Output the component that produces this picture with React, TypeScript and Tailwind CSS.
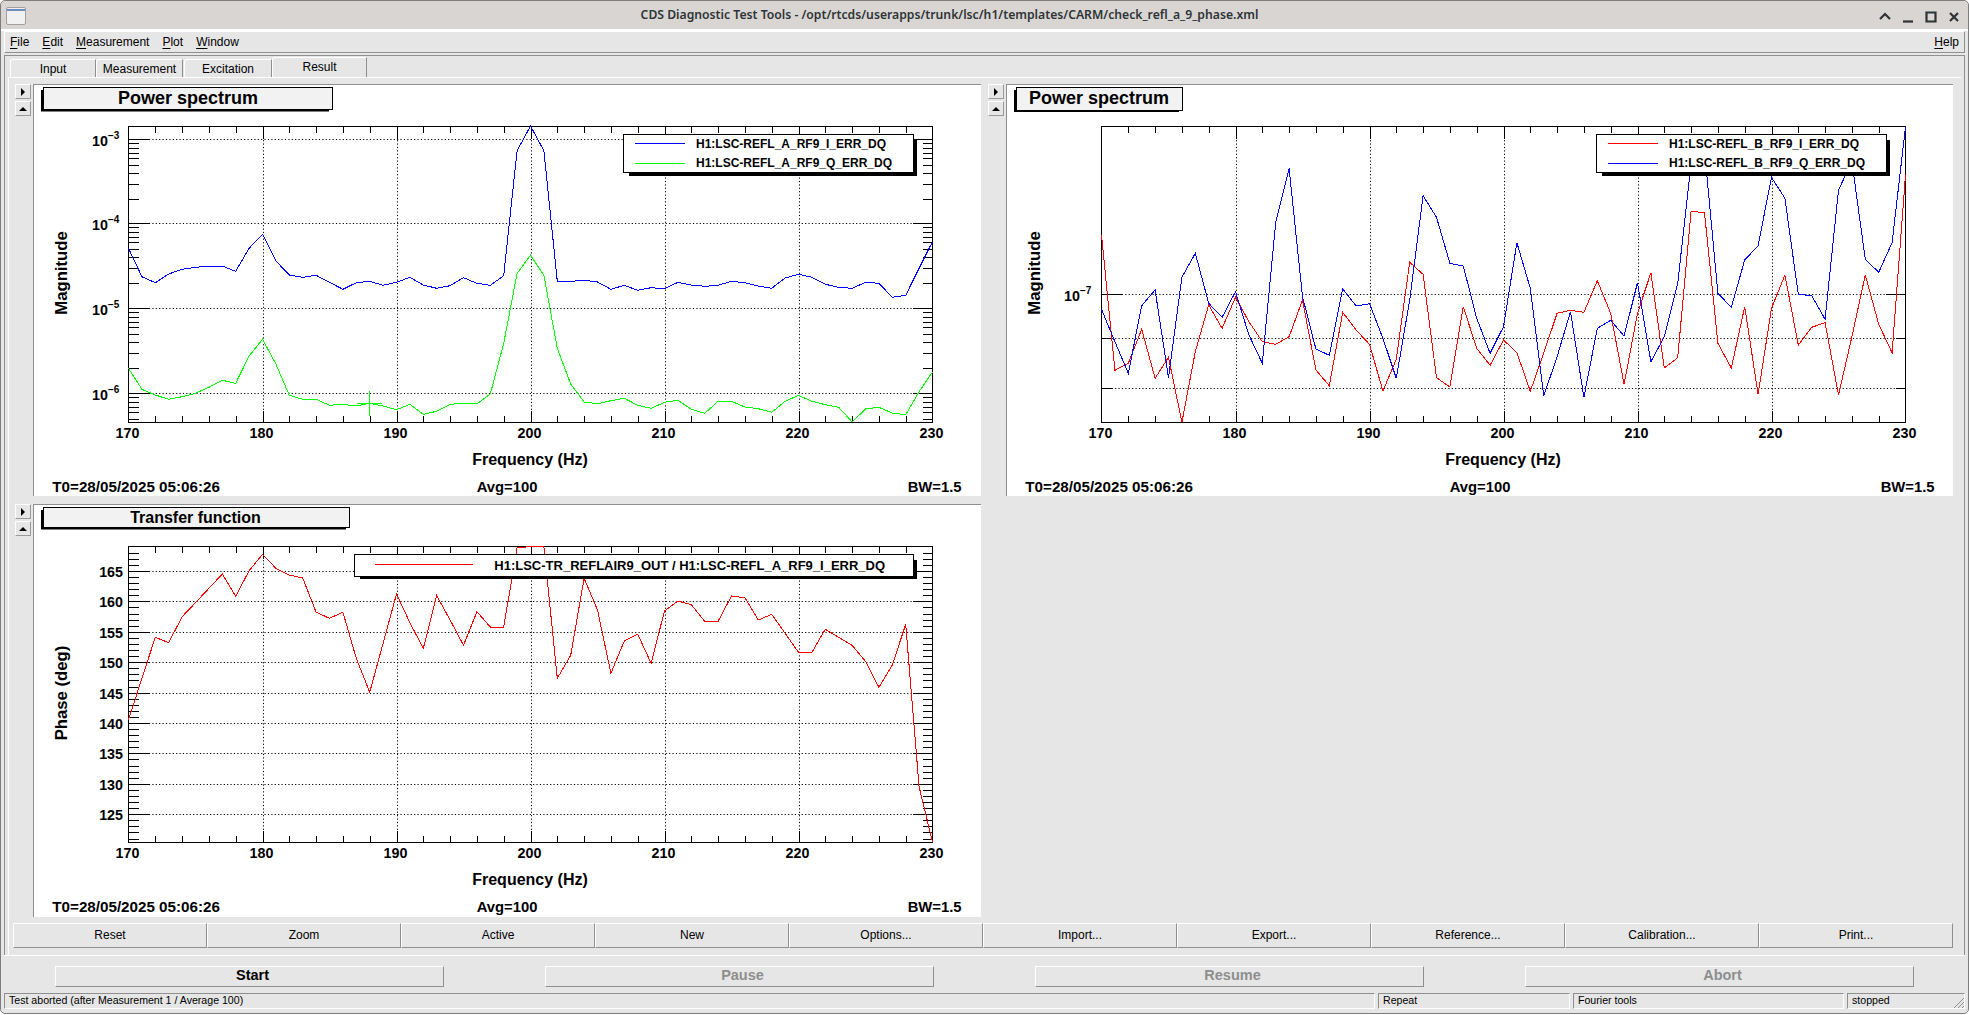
import type { ReactNode } from "react";

// x position of each sample (1 Hz apart, 170..230) inside a plot's canvas
const AX_L = 94.5;
const AX_R = 898.5;
const AX_T = 41.5;
const AX_B = 337.5;
const HZ = (AX_R - AX_L) / 60;
const fx = (f: number) => AX_L + (f - 170) * HZ;

const line = (ys: number[], dy: number) =>
  ys.map((y, i) => `${fx(170 + i).toFixed(1)},${(dy + y / 3).toFixed(1)}`).join(" ");

const A_BLUE = [445, 530, 548, 522, 508, 502, 498, 498, 514, 445, 403, 483, 525, 532, 526, 547, 568, 548, 544, 556, 547, 532, 555, 565, 557, 533, 550, 556, 527, 152, 78, 152, 544, 544, 541, 546, 568, 556, 571, 563, 566, 547, 555, 559, 556, 544, 548, 558, 565, 534, 523, 532, 553, 562, 565, 547, 550, 592, 586, 505, 425];
const A_GREEN = [805, 868, 885, 898, 890, 880, 862, 841, 850, 768, 718, 792, 886, 898, 898, 916, 913, 918, 910, 918, 929, 913, 943, 934, 913, 910, 912, 882, 730, 520, 466, 526, 745, 852, 906, 911, 902, 895, 916, 925, 907, 901, 928, 940, 904, 904, 921, 926, 937, 904, 886, 904, 914, 922, 966, 927, 922, 939, 944, 875, 816];
const B_BLUE = [688, 785, 880, 677, 630, 893, 592, 520, 670, 712, 635, 765, 850, 428, 265, 650, 807, 826, 626, 678, 671, 775, 895, 660, 347, 412, 550, 558, 715, 820, 740, 488, 625, 948, 830, 695, 952, 745, 721, 768, 608, 845, 770, 610, 250, 210, 640, 682, 540, 497, 292, 355, 643, 647, 718, 330, 245, 538, 577, 488, 140];
const B_RED = [465, 871, 850, 748, 895, 832, 1027, 815, 675, 745, 652, 725, 785, 793, 770, 660, 870, 917, 697, 750, 793, 933, 838, 547, 583, 893, 921, 680, 805, 856, 780, 818, 934, 820, 700, 691, 697, 602, 700, 913, 700, 578, 864, 833, 394, 398, 790, 864, 680, 943, 685, 585, 795, 742, 728, 945, 770, 585, 733, 818, 285];
const TF_RED = [660, 535, 412, 428, 350, 308, 265, 222, 289, 212, 163, 205, 225, 234, 337, 355, 337, 475, 577, 430, 282, 368, 445, 287, 360, 436, 335, 381, 381, 143, 140, 140, 535, 466, 235, 330, 520, 423, 402, 490, 333, 303, 314, 364, 364, 288, 293, 360, 343, 400, 457, 457, 388, 412, 436, 484, 562, 495, 373, 860, 1027];

const DECADES = [
  { y: 54.5, exp: "3" },
  { y: 138.5, exp: "4" },
  { y: 223.5, exp: "5" },
  { y: 308.5, exp: "6" },
];

function logMinor(): number[] {
  const out: number[] = [];
  for (const d of DECADES) {
    for (let m = 2; m < 10; m++) {
      const y = d.y + 84.7 * (1 - Math.log10(m));
      if (y > AX_T && y < AX_B) out.push(Math.round(y) + 0.5);
    }
  }
  return out;
}

function Frame({
  grid,
  major,
  minor,
  ylabel,
  labels,
  children,
}: {
  grid: number[];
  major: number[];
  minor: number[];
  ylabel: { x: number; y: number; text: string };
  labels: ReactNode;
  children: ReactNode;
}) {
  const xMajor = [170, 180, 190, 200, 210, 220, 230];
  const xMinor: number[] = [];
  for (let f = 172; f < 230; f += 2) if (f % 10 !== 0) xMinor.push(f);
  return (
    <svg className="block h-full w-full">
      <g stroke="#000" strokeWidth={1} strokeDasharray="1.2 2.2">
        {xMajor.slice(1, -1).map((f) => (
          <line key={f} x1={Math.round(fx(f)) + 0.5} x2={Math.round(fx(f)) + 0.5} y1={AX_T} y2={AX_B} />
        ))}
        {grid.map((y) => (
          <line key={y} x1={AX_L} x2={AX_R} y1={y} y2={y} />
        ))}
      </g>
      <g stroke="#000" strokeWidth={1} shapeRendering="crispEdges">
        {xMinor.map((f) => (
          <g key={f}>
            <line x1={Math.round(fx(f)) + 0.5} x2={Math.round(fx(f)) + 0.5} y1={AX_T} y2={AX_T + 6} />
            <line x1={Math.round(fx(f)) + 0.5} x2={Math.round(fx(f)) + 0.5} y1={AX_B} y2={AX_B - 7} />
          </g>
        ))}
        {xMajor.slice(1, -1).map((f) => (
          <g key={f}>
            <line x1={Math.round(fx(f)) + 0.5} x2={Math.round(fx(f)) + 0.5} y1={AX_T} y2={AX_T + 12} />
            <line x1={Math.round(fx(f)) + 0.5} x2={Math.round(fx(f)) + 0.5} y1={AX_B} y2={AX_B - 12} />
          </g>
        ))}
        {major.map((y) => (
          <g key={y}>
            <line x1={AX_L} x2={AX_L + 20} y1={y} y2={y} />
            <line x1={AX_R} x2={AX_R - 20} y1={y} y2={y} />
          </g>
        ))}
        {minor.map((y) => (
          <g key={y}>
            <line x1={AX_L} x2={AX_L + 10} y1={y} y2={y} />
            <line x1={AX_R} x2={AX_R - 10} y1={y} y2={y} />
          </g>
        ))}
        <rect x={AX_L} y={AX_T} width={AX_R - AX_L} height={AX_B - AX_T} fill="none" />
      </g>
      {children}
      <g className="font-bold" fill="#000">
        {xMajor.map((f) => (
          <text key={f} x={fx(f) - 1} y={352.5} textAnchor="middle" fontSize={14.3}>
            {f}
          </text>
        ))}
        {labels}
        <text
          transform={`translate(${ylabel.x} ${ylabel.y}) rotate(-90)`}
          textAnchor="middle"
          fontSize={16.7}
        >
          {ylabel.text}
        </text>
        <text x={496} y={379.5} textAnchor="middle" fontSize={16}>
          Frequency (Hz)
        </text>
        <text x={18.3} y={406.5} fontSize={15.2}>
          T0=28/05/2025 05:06:26
        </text>
        <text x={442.7} y={406.5} fontSize={14.8}>
          Avg=100
        </text>
        <text x={873.7} y={406.5} fontSize={14.8}>
          BW=1.5
        </text>
      </g>
    </svg>
  );
}

function TitleBox({ x, x2, y2, cx, base, size, text }: { x: number; x2: number; y2: number; cx: number; base: number; size: number; text: string }) {
  return (
    <g>
      <rect x={x - 2.5} y={5} width={x2 - x - 1} height={y2 - 3} fill="#000" />
      <rect x={x} y={2.5} width={x2 - x} height={y2 - 2.5} fill="#f2f2f2" stroke="#000" shapeRendering="crispEdges" />
      <text x={cx} y={base} textAnchor="middle" fontSize={size} className="font-bold">
        {text}
      </text>
    </g>
  );
}

function Legend({ items }: { items: { color: string; text: string }[] }) {
  return (
    <g>
      <rect x={595} y={55} width={288} height={36} fill="#000" />
      <rect x={589.5} y={49.5} width={290} height={38} fill="#fff" stroke="#000" shapeRendering="crispEdges" />
      {items.map((it, i) => (
        <g key={it.text}>
          <line x1={600.5} x2={651} y1={58.5 + i * 20} y2={58.5 + i * 20} stroke={it.color} shapeRendering="crispEdges" />
          <text x={662} y={62.7 + i * 19} fontSize={12} className="font-bold">
            {it.text}
          </text>
        </g>
      ))}
    </g>
  );
}

function PlotA() {
  return (
    <Frame
      grid={DECADES.map((d) => d.y)}
      major={DECADES.map((d) => d.y)}
      minor={logMinor()}
      ylabel={{ x: 33, y: 188, text: "Magnitude" }}
      labels={DECADES.map((d) => (
        <text key={d.exp} x={58} y={d.y + 6} fontSize={14.3}>
          10
          <tspan dy={-7} fontSize={10}>
            −{d.exp}
          </tspan>
        </text>
      ))}
    >
      <polyline points={line(A_BLUE, 15)} fill="none" stroke="#0000ff" shapeRendering="crispEdges" />
      <polyline points={line(A_GREEN, 15)} fill="none" stroke="#00ff00" shapeRendering="crispEdges" />
      {/* cursor cross on the green trace */}
      <g stroke="#00ff00" shapeRendering="crispEdges">
        <line x1={335.5} x2={335.5} y1={305.5} y2={331} />
        <line x1={323} x2={348} y1={318.5} y2={318.5} />
      </g>
      <TitleBox x={9.5} x2={298.5} y2={24.5} cx={154} base={18.7} size={18} text="Power spectrum" />
      <Legend
        items={[
          { color: "#0000ff", text: "H1:LSC-REFL_A_RF9_I_ERR_DQ" },
          { color: "#00ff00", text: "H1:LSC-REFL_A_RF9_Q_ERR_DQ" },
        ]}
      />
    </Frame>
  );
}

function PlotB() {
  return (
    <Frame
      grid={[209.5, 253.5, 303.5]}
      major={[209.5]}
      minor={[253.5, 303.5]}
      ylabel={{ x: 33, y: 188, text: "Magnitude" }}
      labels={
        <text x={57} y={216} fontSize={14.3}>
          10
          <tspan dy={-7} fontSize={10}>
            −7
          </tspan>
        </text>
      }
    >
      <polyline points={line(B_RED, -5)} fill="none" stroke="#ff0000" shapeRendering="crispEdges" />
      <polyline points={line(B_BLUE, -5)} fill="none" stroke="#0000ff" shapeRendering="crispEdges" />
      <TitleBox x={9.5} x2={175.5} y2={25} cx={92} base={18.7} size={18} text="Power spectrum" />
      <Legend
        items={[
          { color: "#ff0000", text: "H1:LSC-REFL_B_RF9_I_ERR_DQ" },
          { color: "#0000ff", text: "H1:LSC-REFL_B_RF9_Q_ERR_DQ" },
        ]}
      />
    </Frame>
  );
}

function PlotTF() {
  const ticks = [165, 160, 155, 150, 145, 140, 135, 130, 125];
  const vy = (v: number) => Math.round(66 + (165 - v) * 6.08) + 0.5;
  const minor: number[] = [];
  for (let v = 121; v <= 168; v++) if (v % 5 !== 0) minor.push(vy(v));
  return (
    <Frame
      grid={ticks.map(vy)}
      major={ticks.map(vy)}
      minor={minor}
      ylabel={{ x: 33, y: 188, text: "Phase (deg)" }}
      labels={ticks.map((v) => (
        <text key={v} x={89} y={vy(v) + 5} textAnchor="end" fontSize={14.3}>
          {v}
        </text>
      ))}
    >
      <polyline points={line(TF_RED, -5)} fill="none" stroke="#ff0000" shapeRendering="crispEdges" />
      <TitleBox x={9.5} x2={315.5} y2={22.5} cx={161.5} base={18.3} size={16} text="Transfer function" />
      <rect x={326} y={55} width={557} height={19} fill="#000" />
      <rect x={320.5} y={49.5} width={559} height={21.5} fill="#fff" stroke="#000" shapeRendering="crispEdges" />
      <line x1={341} x2={438.5} y1={59.5} y2={59.5} stroke="#ff0000" shapeRendering="crispEdges" />
      <text x={460.3} y={64.8} fontSize={13} className="font-bold">
        H1:LSC-TR_REFLAIR9_OUT / H1:LSC-REFL_A_RF9_I_ERR_DQ
      </text>
    </Frame>
  );
}

function ArrowBtn({ points }: { points: string }) {
  return (
    <button className="flex h-[15px] w-[16px] items-center justify-center border-t border-l border-t-white border-l-white border-r border-b border-r-[#9a9a9a] border-b-[#9a9a9a]">
      <svg width="8" height="8" viewBox="0 0 8 8">
        <polygon points={points} fill="#000" />
      </svg>
    </button>
  );
}

function Pane({ children }: { children: ReactNode }) {
  return (
    <div className="flex min-w-0">
      <div className="flex w-[18px] shrink-0 flex-col gap-[2px]">
        <ArrowBtn points="2,0 6,4 2,8" />
        <ArrowBtn points="0,6 4,2 8,6" />
      </div>
      <div className="min-w-0 flex-1 border-t border-l border-[#8f8f8f] bg-white">{children}</div>
    </div>
  );
}

const raised = "border-t border-l border-t-white border-l-white border-r border-b border-r-[#8f8f8f] border-b-[#8f8f8f]";
const sunken = "border-t border-l border-t-[#8f8f8f] border-l-[#8f8f8f] border-r border-b border-r-white border-b-white";

function MenuItem({ first, rest }: { first: string; rest: string }) {
  return (
    <span>
      <span className="underline underline-offset-2">{first}</span>
      {rest}
    </span>
  );
}

const tools = ["Reset", "Zoom", "Active", "New", "Options...", "Import...", "Export...", "Reference...", "Calibration...", "Print..."];

export default function App() {
  return (
    <div className="flex h-[1015px] w-[1969px] flex-col overflow-hidden bg-white font-['Liberation_Sans',sans-serif] text-black">
      <div className="flex h-[1014px] flex-col rounded-[5px] border border-[#7d7d7d] bg-[#e6e6e6]">
        {/* window manager title bar */}
        <div className="relative flex h-[28px] shrink-0 items-center justify-center rounded-t-[5px] bg-[#d9d5d2] pr-[70px] font-['Noto_Sans',sans-serif] text-[12.2px] font-semibold text-[#2e3436]">
          <div className="absolute top-[6px] left-[5px] h-[18px] w-[20px] overflow-hidden rounded-[2px] border border-[#a0a0a0] bg-[#f1f1f1]">
            <div className="mt-[1px] h-[2px] bg-[#6b8cbe]" />
          </div>
          CDS Diagnostic Test Tools - /opt/rtcds/userapps/trunk/lsc/h1/templates/CARM/check_refl_a_9_phase.xml
          <div className="absolute top-[9px] right-[7px] flex gap-[9px]">
            {[
              "M2 9 L7 4 L12 9",
              "M2 11.5 H12",
              "M2.5 2.5 H11.5 V11.5 H2.5 Z",
              "M3 3 L11 11 M11 3 L3 11",
            ].map((d) => (
              <svg key={d} width="14" height="14" viewBox="0 0 14 14" fill="none" stroke="#2e3436" strokeWidth="2.2">
                <path d={d} />
              </svg>
            ))}
          </div>
        </div>

        <div className="flex min-h-0 flex-1 flex-col border-t-2 border-t-white px-[3px] text-[12px]">
          {/* menu bar */}
          <div className={`flex h-[22px] shrink-0 items-center justify-between pr-[5px] pl-[5px] ${raised}`}>
            <div className="flex gap-[13px]">
              <MenuItem first="F" rest="ile" />
              <MenuItem first="E" rest="dit" />
              <MenuItem first="M" rest="easurement" />
              <MenuItem first="P" rest="lot" />
              <MenuItem first="W" rest="indow" />
            </div>
            <MenuItem first="H" rest="elp" />
          </div>

          {/* tabs + result panel */}
          <div className="mt-[2px] flex min-h-0 flex-1 flex-col border-t border-r border-l border-[#8f8f8f]">
            <div className="flex h-[21px] shrink-0 items-end pl-[5px]">
              <div className={`flex h-[18px] w-[86px] items-center justify-center rounded-tl-[3px] ${raised} border-b-0`}>Input</div>
              <div className={`flex h-[18px] w-[87px] items-center justify-center rounded-tl-[3px] ${raised} border-b-0`}>Measurement</div>
              <div className={`ml-[1px] flex h-[18px] w-[88px] items-center justify-center rounded-tl-[3px] ${raised} border-b-0`}>Excitation</div>
              <div className={`flex h-[20px] w-[95px] items-center justify-center rounded-tl-[3px] pb-[2px] ${raised} border-b-0`}>Result</div>
            </div>
            <div className="mx-[3px] flex min-h-0 flex-1 flex-col border-t border-l border-t-white border-l-white pr-[8px] pb-[4px]">
              <div className="grid h-[839px] shrink-0 grid-cols-[966px_965px] grid-rows-[412px_413px] gap-x-[7px] gap-y-[8px] pt-[6px] pl-[6px]">
                <Pane>
                  <PlotA />
                </Pane>
                <Pane>
                  <PlotB />
                </Pane>
                <Pane>
                  <PlotTF />
                </Pane>
                <div />
              </div>
              <div className="mt-[6px] flex h-[25px] shrink-0 pl-[4px]">
                {tools.map((t) => (
                  <button key={t} className={`h-full flex-1 pb-[2px] ${raised}`}>
                    {t}
                  </button>
                ))}
              </div>
            </div>
          </div>

          {/* run controls */}
          <div className="flex h-[38px] shrink-0 items-start justify-between border-t border-t-white px-[51px] pt-[10px] text-[14.5px] font-bold">
            <button className={`h-[21px] w-[389px] pb-[3px] pl-[6px] leading-[16px] ${raised}`}>Start</button>
            <button className={`h-[21px] w-[389px] pb-[3px] pl-[6px] leading-[16px] text-[#8e8e8e] ${raised}`}>Pause</button>
            <button className={`h-[21px] w-[389px] pb-[3px] pl-[6px] leading-[16px] text-[#8e8e8e] ${raised}`}>Resume</button>
            <button className={`h-[21px] w-[389px] pb-[3px] pl-[6px] leading-[16px] text-[#8e8e8e] ${raised}`}>Abort</button>
          </div>

          {/* status bar */}
          <div className="mb-[4px] flex h-[16px] shrink-0 gap-[3px] text-[10.6px] leading-[13px]">
            <div className={`flex-1 pl-[4px] ${sunken}`}>Test aborted (after Measurement 1 / Average 100)</div>
            <div className={`w-[192px] pl-[4px] ${sunken}`}>Repeat</div>
            <div className={`w-[271px] pl-[4px] ${sunken}`}>Fourier tools</div>
            <div className={`relative w-[118px] pl-[4px] ${sunken}`}>
              stopped
              <svg className="absolute right-[0px] bottom-[0px]" width="11" height="11" viewBox="0 0 11 11" stroke="#8f8f8f" strokeWidth="1">
                <path d="M1 11 L11 1 M5 11 L11 5 M9 11 L11 9" />
              </svg>
            </div>
          </div>
        </div>
      </div>
    </div>
  );
}
